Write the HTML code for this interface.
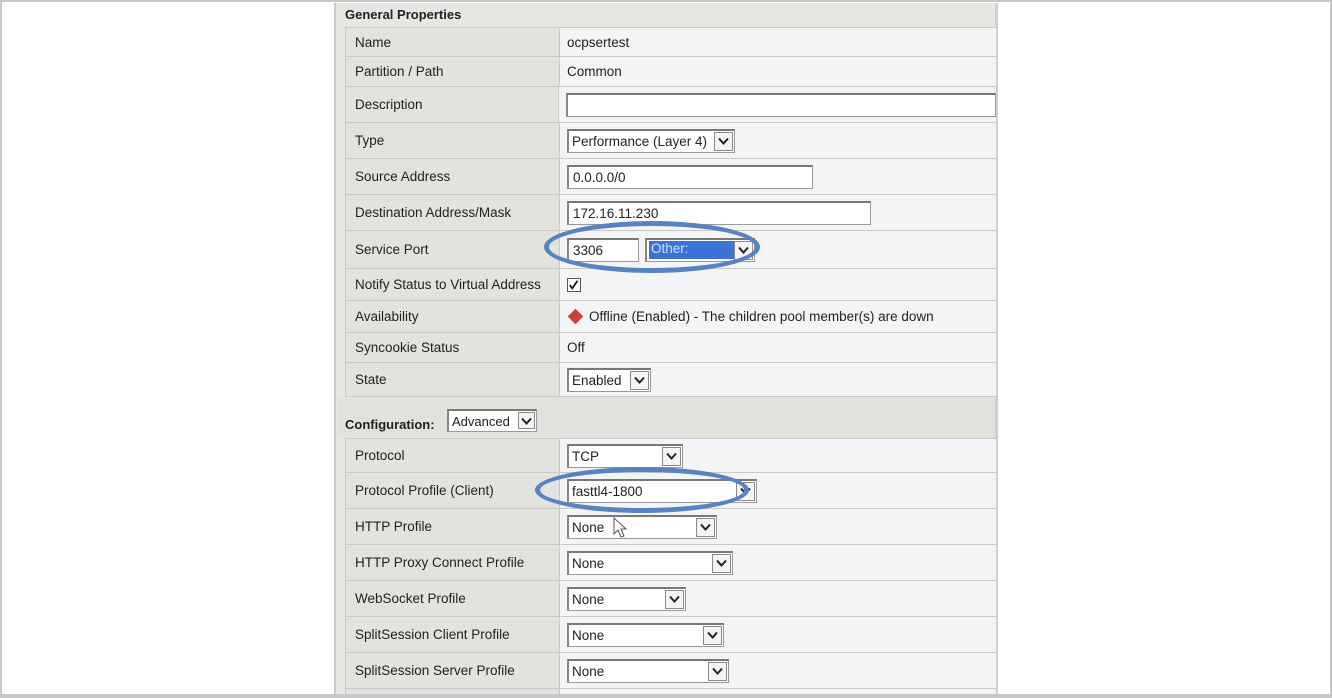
<!DOCTYPE html>
<html><head><style>
*{margin:0;padding:0;box-sizing:border-box}
body{width:1332px;height:698px;background:#fff;position:relative;overflow:hidden;font-family:"Liberation Sans",Arial,sans-serif;font-size:13.5px;color:#222}
.frame{position:absolute;left:0;top:0;width:1332px;height:698px;border:2px solid #c8c8c8;border-bottom-width:4px}
.panel{position:absolute;left:334px;top:3px;width:664px;height:692px;background:#e6e6e3;border-left:2px solid #c9c9c9;border-right:3px solid #cfcfcf}
.h{position:absolute;font-weight:bold;font-size:13px;color:#222}
.row{position:absolute;left:345px;width:651px;border-top:1px solid #c9c9c6;display:flex}
.l{width:215px;height:100%;background:#e2e2df;border-right:1px solid #c9c9c6;border-left:1px solid #c9c9c6;padding-left:9px;display:flex;align-items:center}
.v{flex:1;height:100%;background:#f3f4f5;padding-left:7px;display:flex;align-items:center;position:relative}
.in{background:#fff;border:1px solid #999;border-top:2px solid #777;border-left:2px solid #888;height:24px;display:flex;align-items:center;padding-left:4px;position:relative}
.sel{background:#fff;border:1px solid #999;border-top:2px solid #777;border-left:2px solid #888;height:24px;display:flex;align-items:center;padding-left:3px;position:relative}
.ar{position:absolute;right:1px;top:1px;width:19px;height:19px;border:1px solid #888;background:#f4f4f4;display:flex;align-items:center;justify-content:center}
.ar svg{width:11px;height:8px}
.ov{position:absolute;border:5px solid #5782c4;border-radius:50%}
</style></head><body>
<div class="frame"></div>
<div class="panel"></div>
<div class="h" style="left:345px;top:7px">General Properties</div>

<div class="row" style="top:27px;height:29px"><div class="l">Name</div><div class="v">ocpsertest</div></div>
<div class="row" style="top:56px;height:30px"><div class="l">Partition / Path</div><div class="v">Common</div></div>
<div class="row" style="top:86px;height:36px"><div class="l">Description</div><div class="v"><div class="in" style="width:430px"></div></div></div>
<div class="row" style="top:122px;height:36px"><div class="l">Type</div><div class="v"><div class="sel" style="width:168px">Performance (Layer 4)<div class="ar"><svg viewBox="0 0 11 8"><path d="M1 1.5L5.5 6.5L10 1.5" stroke="#222" stroke-width="2" fill="none"/></svg></div></div></div></div>
<div class="row" style="top:158px;height:36px"><div class="l">Source Address</div><div class="v"><div class="in" style="width:246px">0.0.0.0/0</div></div></div>
<div class="row" style="top:194px;height:36px"><div class="l">Destination Address/Mask</div><div class="v"><div class="in" style="width:304px">172.16.11.230</div></div></div>
<div class="row" style="top:230px;height:38px"><div class="l">Service Port</div><div class="v"><div class="in" style="width:72px;background:#fff">3306</div><div class="sel" style="width:110px;margin-left:6px;padding-left:2px"><span style="background:#3b74d8;color:#cfe0ff;width:85px;height:18px;display:block;padding-left:2px">Other:</span><div class="ar"><svg viewBox="0 0 11 8"><path d="M1 1.5L5.5 6.5L10 1.5" stroke="#222" stroke-width="2" fill="none"/></svg></div></div></div></div>
<div class="row" style="top:268px;height:32px"><div class="l">Notify Status to Virtual Address</div><div class="v"><div style="width:14px;height:14px;border:1px solid #555;background:#fff;position:relative"><svg viewBox="0 0 14 14" style="position:absolute;left:0;top:0;width:12px;height:12px"><path d="M2 7L5 11L11 2" stroke="#111" stroke-width="2" fill="none"/></svg></div></div></div>
<div class="row" style="top:300px;height:32px"><div class="l">Availability</div><div class="v"><span style="display:inline-block;width:11px;height:11px;background:#c4443c;transform:rotate(45deg);margin:0 8px 0 3px"></span>Offline (Enabled) - The children pool member(s) are down</div></div>
<div class="row" style="top:332px;height:30px"><div class="l">Syncookie Status</div><div class="v">Off</div></div>
<div class="row" style="top:362px;height:35px;border-bottom:1px solid #c9c9c6"><div class="l">State</div><div class="v"><div class="sel" style="width:84px">Enabled<div class="ar"><svg viewBox="0 0 11 8"><path d="M1 1.5L5.5 6.5L10 1.5" stroke="#222" stroke-width="2" fill="none"/></svg></div></div></div></div>

<div style="position:absolute;left:337px;top:398px;width:658px;height:40px;background:#e1e1de"></div>
<div class="h" style="left:345px;top:417px">Configuration:</div>
<div class="sel" style="position:absolute;left:447px;top:409px;width:90px;height:23px;font-size:13px">Advanced<div class="ar" style="width:17px;height:17px"><svg viewBox="0 0 11 8"><path d="M1 1.5L5.5 6.5L10 1.5" stroke="#222" stroke-width="2" fill="none"/></svg></div></div>

<div class="row" style="top:438px;height:34px"><div class="l">Protocol</div><div class="v"><div class="sel" style="width:116px">TCP<div class="ar"><svg viewBox="0 0 11 8"><path d="M1 1.5L5.5 6.5L10 1.5" stroke="#222" stroke-width="2" fill="none"/></svg></div></div></div></div>
<div class="row" style="top:472px;height:36px"><div class="l">Protocol Profile (Client)</div><div class="v"><div class="sel" style="width:190px">fasttl4-1800<div class="ar"><svg viewBox="0 0 11 8"><path d="M1 1.5L5.5 6.5L10 1.5" stroke="#222" stroke-width="2" fill="none"/></svg></div></div></div></div>
<div class="row" style="top:508px;height:36px"><div class="l">HTTP Profile</div><div class="v"><div class="sel" style="width:150px">None<div class="ar"><svg viewBox="0 0 11 8"><path d="M1 1.5L5.5 6.5L10 1.5" stroke="#222" stroke-width="2" fill="none"/></svg></div></div>
<svg style="position:absolute;left:53px;top:8px" width="16" height="22" viewBox="0 0 16 22"><path d="M1 1L1 17L5 13L8 20L11 19L8 12L13 12Z" fill="#fff" stroke="#555" stroke-width="1"/></svg></div></div>
<div class="row" style="top:544px;height:36px"><div class="l">HTTP Proxy Connect Profile</div><div class="v"><div class="sel" style="width:166px">None<div class="ar"><svg viewBox="0 0 11 8"><path d="M1 1.5L5.5 6.5L10 1.5" stroke="#222" stroke-width="2" fill="none"/></svg></div></div></div></div>
<div class="row" style="top:580px;height:36px"><div class="l">WebSocket Profile</div><div class="v"><div class="sel" style="width:119px">None<div class="ar"><svg viewBox="0 0 11 8"><path d="M1 1.5L5.5 6.5L10 1.5" stroke="#222" stroke-width="2" fill="none"/></svg></div></div></div></div>
<div class="row" style="top:616px;height:36px"><div class="l">SplitSession Client Profile</div><div class="v"><div class="sel" style="width:157px">None<div class="ar"><svg viewBox="0 0 11 8"><path d="M1 1.5L5.5 6.5L10 1.5" stroke="#222" stroke-width="2" fill="none"/></svg></div></div></div></div>
<div class="row" style="top:652px;height:36px"><div class="l">SplitSession Server Profile</div><div class="v"><div class="sel" style="width:162px">None<div class="ar"><svg viewBox="0 0 11 8"><path d="M1 1.5L5.5 6.5L10 1.5" stroke="#222" stroke-width="2" fill="none"/></svg></div></div></div></div>
<div class="row" style="top:688px;height:10px"><div class="l"></div><div class="v"></div></div>
<div style="position:absolute;left:0;top:694px;width:1332px;height:4px;background:#c8c8c8"></div>

<div class="ov" style="left:544px;top:221px;width:216px;height:52px"></div>
<div class="ov" style="left:535px;top:467px;width:214px;height:46px"></div>
</body></html>
